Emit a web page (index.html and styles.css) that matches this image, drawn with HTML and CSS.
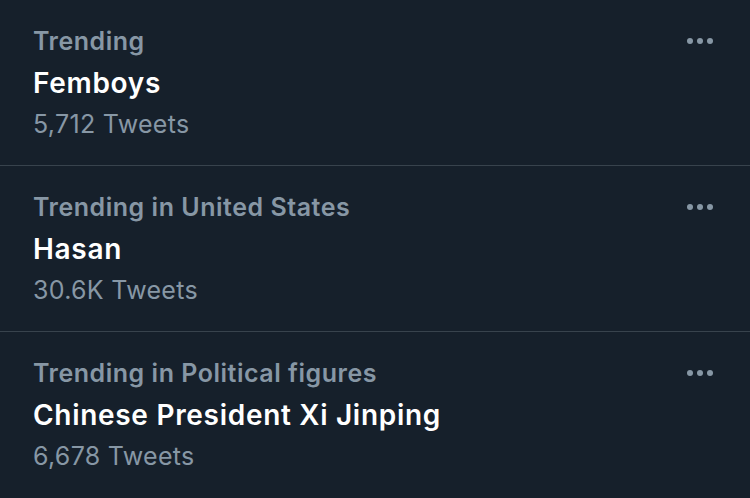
FILE: index.html
```html
<!DOCTYPE html>
<html>
<head>
<meta charset="utf-8">
<link rel="stylesheet" href="styles.css">
</head>
<body>
<div class="list">
  <div class="trend">
    <div class="text">
      <div class="context">Trending</div>
      <div class="topic">Femboys</div>
      <div class="count">5,712 Tweets</div>
    </div>
    <div class="more"><span></span><span></span><span></span></div>
  </div>
  <div class="trend">
    <div class="text">
      <div class="context">Trending in United States</div>
      <div class="topic">Hasan</div>
      <div class="count">30.6K Tweets</div>
    </div>
    <div class="more"><span></span><span></span><span></span></div>
  </div>
  <div class="trend last">
    <div class="text">
      <div class="context">Trending in Political figures</div>
      <div class="topic">Chinese President Xi Jinping</div>
      <div class="count">6,678 Tweets</div>
    </div>
    <div class="more"><span></span><span></span><span></span></div>
  </div>
</div>
</body>
</html>
```
FILE: styles.css
```css
html, body {
  margin: 0;
  padding: 0;
  background: #16202b;
}
body {
  width: 750px;
  height: 498px;
  overflow: hidden;
  font-family: Inter, "Liberation Sans", Arial, sans-serif;
}
.list {
  display: flex;
  flex-direction: column;
}
.trend {
  height: 146px;
  border-bottom: 1px solid #38434d;
  display: flex;
  justify-content: space-between;
  padding: 19px 0 0 33px;
}
.trend.last {
  border-bottom: none;
}
.context {
  color: #8797a5;
  font-size: 25px;
  font-weight: 600;
  letter-spacing: 0.52px;
  line-height: 45px;
}
.topic {
  color: #ffffff;
  font-size: 28px;
  font-weight: 600;
  letter-spacing: 0.7px;
  line-height: 39px;
}
.count {
  color: #8797a5;
  font-size: 25px;
  font-weight: 400;
  letter-spacing: 0.3px;
  line-height: 42px;
}
.more {
  display: flex;
  gap: 4px;
  padding: 19px 37px 0 0;
  height: 6px;
}
.more span {
  width: 6px;
  height: 6px;
  border-radius: 50%;
  background: #8797a5;
}
```
